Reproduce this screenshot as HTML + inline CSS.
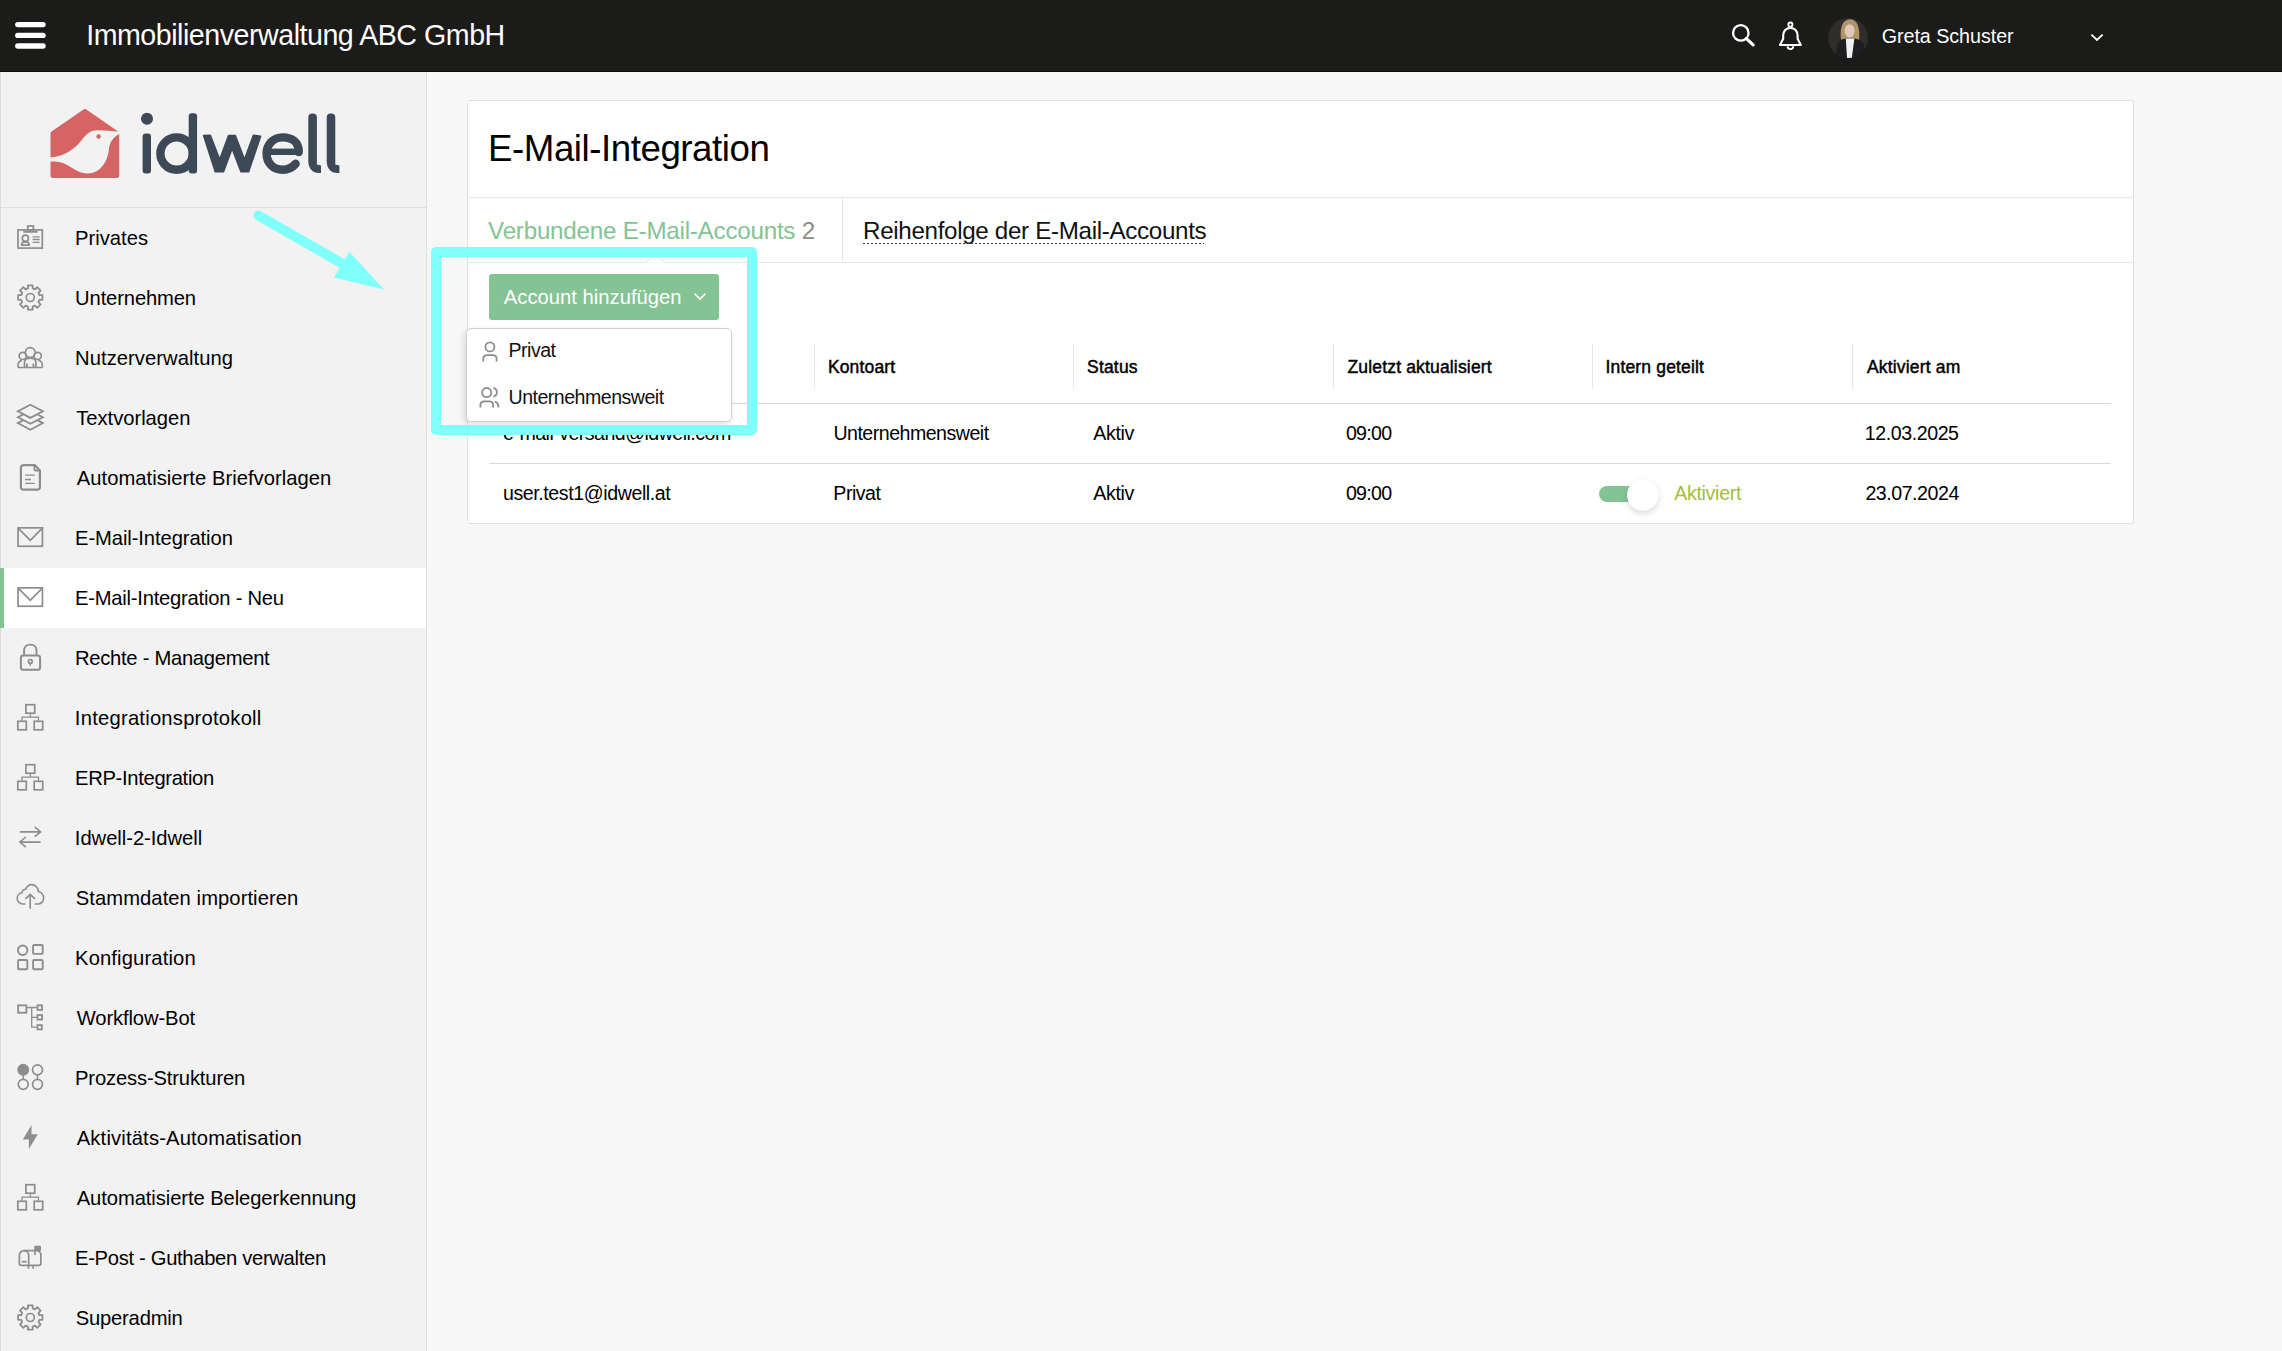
<!DOCTYPE html>
<html><head><meta charset="utf-8">
<style>
*{box-sizing:border-box;margin:0;padding:0}
html,body{width:2282px;height:1351px;overflow:hidden;background:#f7f7f7;font-family:"Liberation Sans",sans-serif;color:#000}
.abs{position:absolute}
.t{position:absolute;white-space:nowrap;line-height:1}
#hdr{position:absolute;left:0;top:0;width:2282px;height:72px;background:#1b1b1a;border-bottom:1px solid #0c0c0c}
#side{position:absolute;left:0;top:72px;width:427px;height:1279px;background:#f2f2f2;border-right:1px solid #dedede;border-left:1px solid #dcdcdc}
#sidel{position:absolute;left:1px;top:207px;width:425px;height:1px;background:#dedede}
.item{position:absolute;left:1px;width:425px;height:60px}
.item.act{background:#fff}
.item.act:before{content:"";position:absolute;left:-1px;top:0;width:4px;height:60px;background:#84c394}
.item .t{left:74.5px;top:19.9px;font-size:20.2px;letter-spacing:0.036px;color:#000}
.item svg{position:absolute;left:13px;top:14px;width:32px;height:32px}
#card{position:absolute;left:467px;top:100px;width:1667px;height:424px;background:#fff;border:1px solid #e1e1e1;border-radius:3px}
.hl{position:absolute;height:1px;background:#e7e7e7}
.vl{position:absolute;width:1px;background:#e6e6e6}
.th{position:absolute;white-space:nowrap;line-height:1;font-size:17.5px;letter-spacing:0.164px;-webkit-text-stroke:0.45px #000;top:358.8px}
.r1{position:absolute;white-space:nowrap;line-height:1;font-size:19.6px;letter-spacing:-0.512px;top:423.9px}
.r2{position:absolute;white-space:nowrap;line-height:1;font-size:19.6px;letter-spacing:-0.512px;top:483.9px}
</style></head><body>
<div id="hdr">
  <svg class="abs" style="left:14px;top:20px" width="34" height="32" viewBox="0 0 34 32">
    <g stroke="#fff" stroke-width="5.4" stroke-linecap="round"><line x1="3.8" y1="4.6" x2="29" y2="4.6"/><line x1="3.8" y1="15.4" x2="29" y2="15.4"/><line x1="3.8" y1="26" x2="29" y2="26"/></g>
  </svg>
  <div class="t" style="left:86.2px;top:21px;font-size:28.6px;letter-spacing:-0.472px;color:#fff">Immobilienverwaltung ABC GmbH</div>
  <!-- search -->
  <svg class="abs" style="left:1726px;top:18px" width="36" height="36" viewBox="0 0 36 36">
    <circle cx="14.8" cy="14.9" r="7.75" fill="none" stroke="#fff" stroke-width="2.3"/>
    <path d="M20.4 20.6L27.1 26.9" stroke="#fff" stroke-width="3.2" stroke-linecap="round"/>
  </svg>
  <!-- bell -->
  <svg class="abs" style="left:1772px;top:18px" width="36" height="36" viewBox="0 0 36 36">
    <path d="M18.4 9.9C13.6 9.9 11.2 13.6 11.2 17.5V20.8L8 27H28.8L25.6 20.8V17.5C25.6 13.6 23.2 9.9 18.4 9.9Z" fill="none" stroke="#fff" stroke-width="2.1" stroke-linejoin="round"/>
    <circle cx="18.4" cy="6.6" r="2.1" fill="none" stroke="#fff" stroke-width="1.8"/>
    <path d="M15.6 28.2A2.8 2.8 0 0 0 21.2 28.2" fill="none" stroke="#fff" stroke-width="1.9"/>
  </svg>
  <!-- avatar -->
  <svg class="abs" style="left:1828px;top:18px" width="40" height="40" viewBox="0 0 40 40">
    <defs><clipPath id="avc"><circle cx="20" cy="20" r="20"/></clipPath></defs>
    <g clip-path="url(#avc)">
      <rect width="40" height="40" fill="#2e2d2a"/>
      <path d="M13 21.5C12 14 12.5 1.6 22 1.2C30 1.5 31.8 10 31.2 21.5Z" fill="#b0956b"/>
      <ellipse cx="21.6" cy="12.8" rx="5" ry="6.6" fill="#e2c8b9"/>
      <path d="M8 40L9.5 26C11 22.5 15 21 18 20.5H26C30 21 34.5 23 36 27L37 40Z" fill="#1d1d22"/>
      <path d="M17.8 20.6H26.4L23.8 40H19Z" fill="#f1f0f0"/>
    </g>
  </svg>
  <div class="t" style="left:1881.7px;top:26.8px;font-size:19.7px;letter-spacing:-0.035px;color:#fff">Greta Schuster</div>
  <svg class="abs" style="left:2088px;top:30px" width="18" height="14" viewBox="0 0 18 14">
    <path d="M3.4 4.7L9 9.9L14.6 4.7" fill="none" stroke="#fff" stroke-width="1.8"/>
  </svg>
</div>

<div id="side"></div>
<div class="item" style="top:208px"><svg viewBox="0 0 32 32"><g fill="none" stroke="#8d8d8d" stroke-width="1.7"><rect x="4" y="7.9" width="24.3" height="18.2"/><rect x="13.8" y="4" width="5.6" height="3.9"/><path d="M10.1 8.6V9.8H22.7V8.6"/><circle cx="11.4" cy="16.3" r="3.1"/><path d="M7.6 23.2C7.6 20.6 9 19.9 11.4 19.9C13.8 19.9 15.2 20.6 15.2 23.2Z"/><path d="M18.6 14.8H25.6M18.6 17.5H25.6M18.6 20.3H25.6" stroke-width="1.3"/></g></svg><div class="t" style="left:74.04px;letter-spacing:0.007px">Privates</div></div>
<div class="item" style="top:268px"><svg viewBox="0 0 32 32"><g fill="none" stroke="#8d8d8d" stroke-width="1.7"><path d="M13.87 6.42 L13.93 3.33 L18.67 3.33 L18.73 6.42 L21.00 7.36 L23.23 5.22 L26.58 8.57 L24.44 10.80 L25.38 13.07 L28.47 13.13 L28.47 17.87 L25.38 17.93 L24.44 20.20 L26.58 22.43 L23.23 25.78 L21.00 23.64 L18.73 24.58 L18.67 27.67 L13.93 27.67 L13.87 24.58 L11.60 23.64 L9.37 25.78 L6.02 22.43 L8.16 20.20 L7.22 17.93 L4.13 17.87 L4.13 13.13 L7.22 13.07 L8.16 10.80 L6.02 8.57 L9.37 5.22 L11.60 7.36Z" stroke-linejoin="round" stroke-width="1.8"/><circle cx="16.3" cy="15.5" r="4"/></g></svg><div class="t" style="left:74.10px;letter-spacing:-0.135px">Unternehmen</div></div>
<div class="item" style="top:328px"><svg viewBox="0 0 32 32"><g fill="none" stroke="#8d8d8d" stroke-width="1.7"><circle cx="16.2" cy="10.6" r="4.9"/><circle cx="8.7" cy="13.9" r="3.6"/><circle cx="23.7" cy="13.9" r="3.6"/><path d="M10.5 25.4V20.5C10.5 17.5 12.6 16.2 16.2 16.2C19.8 16.2 21.9 17.5 21.9 20.5V25.4M4 25.4C3.5 21 5 18.6 8 18.6M28.4 25.4C28.9 21 27.4 18.6 24.4 18.6M4 25.5H28.4M13 25.4V21.5M19.4 25.4V21.5"/></g></svg><div class="t" style="left:74.04px;letter-spacing:0.062px">Nutzerverwaltung</div></div>
<div class="item" style="top:388px"><svg viewBox="0 0 32 32"><g fill="none" stroke="#8d8d8d" stroke-width="1.7"><path d="M16.4 2.7L28.9 9.3L16.4 15.9L3.9 9.3Z" stroke-width="1.8"/><path d="M9.5 12.25L3.9 15.2L16.4 21.8L28.9 15.2L23.3 12.25M9.5 18.15L3.9 21.1L16.4 27.7L28.9 21.1L23.3 18.15" stroke-width="1.8"/></g></svg><div class="t" style="left:75.20px;letter-spacing:-0.018px">Textvorlagen</div></div>
<div class="item" style="top:448px"><svg viewBox="0 0 32 32"><g fill="none" stroke="#8d8d8d" stroke-width="1.7"><path d="M9.9 3.1H20.7L25.9 8.4V25C25.9 26.6 24.9 27.7 23.3 27.7H9.5C7.9 27.7 6.9 26.6 6.9 25V6.1C6.9 4.3 8.1 3.1 9.9 3.1Z" stroke-width="2.2" stroke-linejoin="round"/><path d="M20.4 3.5V7.6C20.4 8.2 20.8 8.5 21.3 8.5H25.6" stroke-width="1.8"/><path d="M11.1 13.1H20.7M11.1 17.5H17M11.1 21.3H20.7" stroke-width="1.3"/></g></svg><div class="t" style="left:75.74px;letter-spacing:0.036px">Automatisierte Briefvorlagen</div></div>
<div class="item" style="top:508px"><svg viewBox="0 0 32 32"><g fill="none" stroke="#8d8d8d" stroke-width="1.7"><rect x="4.05" y="5.85" width="24.4" height="18.4"/><path d="M4.4 6.3L16.3 18.4L28.1 6.3"/></g></svg><div class="t" style="left:74.04px;letter-spacing:-0.087px">E-Mail-Integration</div></div>
<div class="item act" style="top:568px"><svg viewBox="0 0 32 32"><g fill="none" stroke="#8d8d8d" stroke-width="1.7"><rect x="4.05" y="5.85" width="24.4" height="18.4"/><path d="M4.4 6.3L16.3 18.4L28.1 6.3"/></g></svg><div class="t" style="left:74.04px;letter-spacing:-0.228px">E-Mail-Integration - Neu</div></div>
<div class="item" style="top:628px"><svg viewBox="0 0 32 32"><g fill="none" stroke="#8d8d8d" stroke-width="1.7"><rect x="6.9" y="13.6" width="19.2" height="14.2" rx="2.4" stroke-width="2"/><path d="M10.1 13.6V8.4C10.1 4.9 12.6 2.6 16.3 2.6C20 2.6 22.5 4.9 22.5 8.4V13.6" stroke-width="1.9"/><circle cx="16.3" cy="19.4" r="1.9"/><path d="M16.3 21.3V23.8" stroke-width="1.4"/></g></svg><div class="t" style="left:74.04px;letter-spacing:-0.281px">Rechte - Management</div></div>
<div class="item" style="top:688px"><svg viewBox="0 0 32 32"><g fill="none" stroke="#8d8d8d" stroke-width="1.7"><rect x="11.9" y="2.7" width="8.8" height="8.5"/><path d="M16.3 11.2V15.2M8 18.8V15.2H24.5V18.8" stroke-width="1.3"/><rect x="3.8" y="19.3" width="8.5" height="8.5"/><rect x="20.2" y="19.3" width="8.5" height="8.5"/></g></svg><div class="t" style="left:73.87px;letter-spacing:0.233px">Integrationsprotokoll</div></div>
<div class="item" style="top:748px"><svg viewBox="0 0 32 32"><g fill="none" stroke="#8d8d8d" stroke-width="1.7"><rect x="11.9" y="2.7" width="8.8" height="8.5"/><path d="M16.3 11.2V15.2M8 18.8V15.2H24.5V18.8" stroke-width="1.3"/><rect x="3.8" y="19.3" width="8.5" height="8.5"/><rect x="20.2" y="19.3" width="8.5" height="8.5"/></g></svg><div class="t" style="left:74.04px;letter-spacing:-0.317px">ERP-Integration</div></div>
<div class="item" style="top:808px"><svg viewBox="0 0 32 32"><g fill="none" stroke="#8d8d8d" stroke-width="1.7"><path d="M5.8 9.9H26.6M20.6 4.9L26.6 9.9L20.6 14.6M26.6 20.1H5.8M11.9 15L5.8 20.1L11.9 25.2" stroke-width="1.6"/></g></svg><div class="t" style="left:73.87px;letter-spacing:-0.043px">Idwell-2-Idwell</div></div>
<div class="item" style="top:868px"><svg viewBox="0 0 32 32"><g fill="none" stroke="#8d8d8d" stroke-width="1.7"><path d="M11.5 22H9C5.6 22 3.2 19.4 3.2 16.2C3.2 13.2 5.4 11 8 10.8C8.3 8.6 9.8 7.3 11.5 7.3C13 4.3 15 2.6 17.6 2.6C21.6 2.6 24.2 5.8 24.3 9.6C27.3 10.4 29.6 13 29.6 16.3C29.6 19.6 27 22 23.8 22H20.8" stroke-width="1.6"/><path d="M16.2 26.8V12.5M11.4 16.8L16.2 12.3L21 16.8" stroke-width="1.6"/></g></svg><div class="t" style="left:74.76px;letter-spacing:0.072px">Stammdaten importieren</div></div>
<div class="item" style="top:928px"><svg viewBox="0 0 32 32"><g fill="none" stroke="#8d8d8d" stroke-width="1.7"><circle cx="8.7" cy="8.2" r="4.75" stroke-width="1.9"/><rect x="19.1" y="3" width="9.6" height="8.9" rx="1" stroke-width="1.9"/><rect x="4.1" y="18" width="9.2" height="9.3" rx="1" stroke-width="1.9"/><rect x="19.1" y="18" width="9.6" height="9.3" rx="1" stroke-width="1.9"/></g></svg><div class="t" style="left:74.04px;letter-spacing:0.135px">Konfiguration</div></div>
<div class="item" style="top:988px"><svg viewBox="0 0 32 32"><g fill="none" stroke="#8d8d8d" stroke-width="1.7"><rect x="4.15" y="3.35" width="8.2" height="7.4" stroke-width="1.8"/><rect x="23.45" y="3.35" width="4.6" height="4.5" stroke-width="1.8"/><rect x="23.45" y="13.05" width="4.6" height="4.5" stroke-width="1.8"/><rect x="23.45" y="23.15" width="4.4" height="4.2" stroke-width="1.8"/><path d="M13.2 5.5H22.6M17.7 5.5V25.2H22.6M17.7 15.3H22.6" stroke-width="1.3"/></g></svg><div class="t" style="left:75.74px;letter-spacing:-0.117px">Workflow-Bot</div></div>
<div class="item" style="top:1048px"><svg viewBox="0 0 32 32"><g fill="none" stroke="#8d8d8d" stroke-width="1.7"><circle cx="9.25" cy="7.8" r="5.1" fill="#8d8d8d"/><circle cx="23.5" cy="7.8" r="5"/><circle cx="9.25" cy="22.3" r="5"/><circle cx="23.5" cy="22.3" r="5"/><path d="M9.25 12.5V17.3M23.5 12.5V17.3" stroke-width="1.4"/></g></svg><div class="t" style="left:74.04px;letter-spacing:-0.149px">Prozess-Strukturen</div></div>
<div class="item" style="top:1108px"><svg viewBox="0 0 32 32"><g fill="none" stroke="#8d8d8d" stroke-width="1.7"><path d="M17.5 2.9L8.8 17.6H14.9V26.9L23.8 12.3H17.5Z" fill="#8d8d8d" stroke="none"/></g></svg><div class="t" style="left:75.74px;letter-spacing:0.164px">Aktivitäts-Automatisation</div></div>
<div class="item" style="top:1168px"><svg viewBox="0 0 32 32"><g fill="none" stroke="#8d8d8d" stroke-width="1.7"><rect x="11.9" y="2.7" width="8.8" height="8.5"/><path d="M16.3 11.2V15.2M8 18.8V15.2H24.5V18.8" stroke-width="1.3"/><rect x="3.8" y="19.3" width="8.5" height="8.5"/><rect x="20.2" y="19.3" width="8.5" height="8.5"/></g></svg><div class="t" style="left:75.74px;letter-spacing:-0.082px">Automatisierte Belegerkennung</div></div>
<div class="item" style="top:1228px"><svg viewBox="0 0 32 32"><g fill="none" stroke="#8d8d8d" stroke-width="1.7"><path d="M7.2 23.35H25C26 23.35 26.85 22.6 26.85 21.5V13C26.85 10.6 25 8.65 22.5 8.65H10C7.3 8.65 5.35 10.8 5.35 13.5V21.5C5.35 22.6 6.1 23.35 7.2 23.35Z" stroke-width="1.7"/><path d="M10 8.65C12.7 8.65 14.7 10.8 14.7 13.5V23.35M14.4 23.35V26.8M19.1 23.35V26.8M20.9 9V13.1" stroke-width="1.7"/><rect x="20.3" y="3.7" width="6.7" height="5.3" rx="0.8" fill="#8d8d8d" stroke="none"/><path d="M7.8 19.7H12.6" stroke-width="1.7"/></g></svg><div class="t" style="left:74.04px;letter-spacing:-0.311px">E-Post - Guthaben verwalten</div></div>
<div class="item" style="top:1288px"><svg viewBox="0 0 32 32"><g fill="none" stroke="#8d8d8d" stroke-width="1.7"><path d="M13.87 6.42 L13.93 3.33 L18.67 3.33 L18.73 6.42 L21.00 7.36 L23.23 5.22 L26.58 8.57 L24.44 10.80 L25.38 13.07 L28.47 13.13 L28.47 17.87 L25.38 17.93 L24.44 20.20 L26.58 22.43 L23.23 25.78 L21.00 23.64 L18.73 24.58 L18.67 27.67 L13.93 27.67 L13.87 24.58 L11.60 23.64 L9.37 25.78 L6.02 22.43 L8.16 20.20 L7.22 17.93 L4.13 17.87 L4.13 13.13 L7.22 13.07 L8.16 10.80 L6.02 8.57 L9.37 5.22 L11.60 7.36Z" stroke-linejoin="round" stroke-width="1.8"/><circle cx="16.3" cy="15.5" r="4"/></g></svg><div class="t" style="left:74.76px;letter-spacing:-0.2px">Superadmin</div></div>
<div id="sidel"></div>
<!-- logo -->
<svg class="abs" style="left:40px;top:95px" width="320" height="100" viewBox="40 95 320 100">
  <polygon points="53,175.5 116.7,175.5 116.7,133.6 84.9,111.6 53,133.6" fill="#d66464" stroke="#d66464" stroke-width="5" stroke-linejoin="round"/>
  <path d="M50 157.4C62 157 74 150 81 141C86 134 90 130.5 97 130.2C104 130 112 131 118 131.5L121 133.2C112 137 109.5 143 108.8 150C107.5 162 100 173.5 88 173.5C78 173.5 72 167 63 163C58 161.5 54 161.5 50 161.6Z" fill="#f2f2f2"/>
  <circle cx="98.6" cy="136.5" r="2.2" fill="#d66464"/>
  <g fill="#3e4957" stroke="none">
    <circle cx="147" cy="118.8" r="6"/>
    <rect x="142.6" y="133.6" width="8.4" height="39.9" rx="3"/>
    <rect x="188.7" y="113.2" width="8.4" height="60.3" rx="3"/>
  </g>
  <g fill="none" stroke="#3e4957" stroke-width="8.4">
    <circle cx="176.6" cy="153.6" r="16.2"/>
    <path d="M203.6 135.6L210.3 135.3L219.7 159.6L228.6 135.5L235.3 135.5L244.5 159.6L253.4 135.3L260.6 136.2L248.6 171.8L241 171.8L232.1 148.4L223.5 171.8L215.3 171.8Z" fill="#3e4957" stroke="#3e4957" stroke-width="1.6" stroke-linejoin="round"/>
    <path d="M298.8 152C298.8 142 292 137.4 282.7 137.4C273 137.4 266.6 144.6 266.6 153.6C266.6 163.2 273.4 169.8 282.7 169.8C288.6 169.8 292.6 167.4 295.6 163.8" stroke-linecap="round"/>
    <path d="M269 151.8H299" stroke-width="6.4"/>
    <path d="M308.3 117.5Q308.3 113.5 312.3 113.5H312.9Q316.9 113.5 316.9 117.5V164.5L321 165.5V173H319C312.5 173 308.3 168.5 308.3 161Z" fill="#3e4957" stroke="none"/>
    <path d="M326.7 117.5Q326.7 113.5 330.7 113.5H331.3Q335.3 113.5 335.3 117.5V164.5L339.4 165.5V173H337.4C330.9 173 326.7 168.5 326.7 161Z" fill="#3e4957" stroke="none"/>
  </g>
</svg>

<div id="card"></div>
<div class="t" style="left:488px;top:130.8px;font-size:36.7px;letter-spacing:-0.451px">E-Mail-Integration</div>
<div class="hl" style="left:468px;top:197px;width:1665px"></div>
<div class="vl" style="left:842px;top:198px;height:64px"></div>
<div class="t" style="left:488.1px;top:219.4px;font-size:24.2px;letter-spacing:-0.236px;color:#84c394">Verbundene E-Mail-Accounts <span style="color:#8b8b8b">2</span></div>
<div class="t" style="left:863px;top:219.2px;font-size:24.2px;letter-spacing:-0.33px;color:#111">Reihenfolge der E-Mail-Accounts</div>
<div class="abs" style="left:863px;top:242.7px;width:341px;height:1.6px;background:repeating-linear-gradient(90deg,#3a3a3a 0 2px,transparent 2px 4px)"></div>
<div class="hl" style="left:468px;top:262px;width:1665px"></div>
<!-- notch -->
<svg class="abs" style="left:645px;top:255px" width="20" height="8" viewBox="0 0 20 8">
  <path d="M0 7.5L10 0.8L20 7.5" fill="#fff" stroke="#e3e3e3" stroke-width="1"/>
  <rect x="1" y="7" width="18" height="1" fill="#fff"/>
</svg>

<!-- button -->
<div class="abs" style="left:489px;top:274px;width:230px;height:46px;background:#84c394;border-radius:3px"></div>
<div class="t" style="left:503.8px;top:286.9px;font-size:20.2px;letter-spacing:0.025px;color:#fff">Account hinzufügen</div>
<svg class="abs" style="left:690px;top:288px" width="20" height="16" viewBox="0 0 20 16">
  <path d="M4.6 5.6L10 11L15.4 5.6" fill="none" stroke="#fff" stroke-width="1.6"/>
</svg>

<!-- table -->
<div class="vl" style="left:814px;top:344px;height:45px"></div>
<div class="vl" style="left:1073px;top:344px;height:45px"></div>
<div class="vl" style="left:1333px;top:344px;height:45px"></div>
<div class="vl" style="left:1592px;top:344px;height:45px"></div>
<div class="vl" style="left:1852px;top:344px;height:45px"></div>
<div class="th" style="left:510px">E-Mail-Adresse</div>
<div class="th" style="left:827.9px">Kontoart</div>
<div class="th" style="left:1087.1px">Status</div>
<div class="th" style="left:1347.5px">Zuletzt aktualisiert</div>
<div class="th" style="left:1605.5px">Intern geteilt</div>
<div class="th" style="left:1867px">Aktiviert am</div>
<div class="hl" style="left:489px;top:403px;width:1622px;height:1px;background:#d9d9d9"></div>
<div class="r1" style="left:503.1px;letter-spacing:-0.534px">e-mail-versand@idwell.com</div>
<div class="r1" style="left:833.4px">Unternehmensweit</div>
<div class="r1" style="left:1093.3px;letter-spacing:-0.388px">Aktiv</div>
<div class="r1" style="left:1345.9px;letter-spacing:-0.695px">09:00</div>
<div class="r1" style="left:1864.8px;letter-spacing:-0.429px">12.03.2025</div>
<div class="hl" style="left:489px;top:463px;width:1622px;height:1px;background:#d9d9d9"></div>
<div class="r2" style="left:502.9px;letter-spacing:-0.408px">user.test1@idwell.at</div>
<div class="r2" style="left:833.3px;letter-spacing:-0.487px">Privat</div>
<div class="r2" style="left:1093.3px;letter-spacing:-0.388px">Aktiv</div>
<div class="r2" style="left:1345.9px;letter-spacing:-0.695px">09:00</div>
<div class="r2" style="left:1865.4px;letter-spacing:-0.462px">23.07.2024</div>
<!-- toggle -->
<div class="abs" style="left:1599px;top:486px;width:50px;height:16px;border-radius:8px;background:#84c394"></div>
<div class="abs" style="left:1627px;top:478.5px;width:32px;height:32px;border-radius:50%;background:#fff;box-shadow:0 3px 6px rgba(0,0,0,.13),0 0 1px rgba(0,0,0,.08)"></div>
<div class="r2" style="left:1674.2px;top:484px;letter-spacing:-0.308px;color:#a2bd40">Aktiviert</div>

<!-- dropdown -->
<div class="abs" style="left:465.5px;top:327.8px;width:266.5px;height:94px;background:#fff;border:1px solid #d0d0d0;border-radius:5px;box-shadow:-2px 3px 7px rgba(0,0,0,.12)"></div>
<svg class="abs" style="left:476px;top:338px" width="28" height="28" viewBox="0 0 28 28">
  <g fill="none" stroke="#8d8d8d" stroke-width="1.8"><circle cx="13.9" cy="8.9" r="4.5"/><path d="M7.3 23.6V20.8C7.3 18.6 8.8 17.1 11 17.1H16.9C19.1 17.1 20.6 18.6 20.6 20.8V23.6"/></g>
</svg>
<div class="t" style="left:508.4px;top:340.9px;font-size:19.6px;letter-spacing:-0.487px;color:#111">Privat</div>
<svg class="abs" style="left:476px;top:384px" width="28" height="28" viewBox="0 0 28 28">
  <g fill="none" stroke="#8d8d8d" stroke-width="1.8"><circle cx="10.7" cy="8.6" r="4.6"/><path d="M17.3 3.9A4.49 4.49 0 0 1 17.3 12.7"/><path d="M4.4 23.5V21C4.4 18.6 6 17.3 8.4 17.3H13.1C15.5 17.3 17.1 18.6 17.1 21V23.5M18.9 17.6C21.2 18.3 22.3 19.9 22.3 22V23.5"/></g>
</svg>
<div class="t" style="left:508.5px;top:387.8px;font-size:19.6px;letter-spacing:-0.519px;color:#111">Unternehmensweit</div>

<!-- annotation -->
<div class="abs" style="left:431.4px;top:246.6px;width:326px;height:188.4px;border:10px solid #80fffb;border-radius:5px"></div>
<svg class="abs" style="left:240px;top:200px" width="160" height="100" viewBox="240 200 160 100">
  <path d="M258.5 215.5L342 263.5" stroke="#80fffb" stroke-width="10" stroke-linecap="round"/>
  <polygon points="349.4,251.8 384,289.6 334,277.4" fill="#80fffb"/>
</svg>
</body></html>
